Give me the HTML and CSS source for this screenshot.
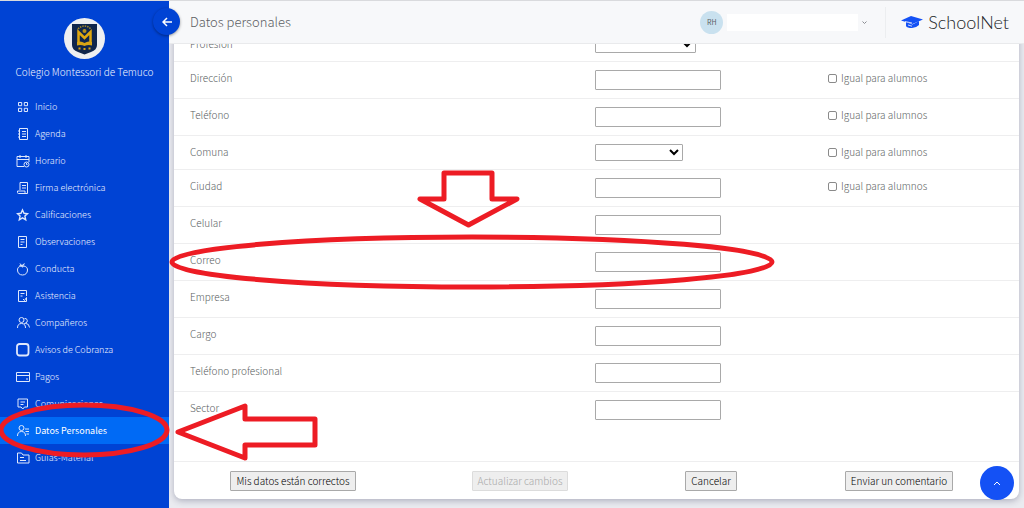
FILE: index.html
```
<!DOCTYPE html>
<html lang="es">

<head>
    <meta charset="UTF-8" />
    <meta name="viewport" content="width=device-width, initial-scale=1.0" />
    <title>SchoolNet - Datos personales</title>
    <link rel="stylesheet" href="styles.css">
</head>

<body>
    <div class="layout">
        <aside class="sidebar">
            <div class="school">
                <svg class="crest" viewBox="0 0 41 41">
                    <circle cx="20.5" cy="20.5" r="20.5" fill="#eeeff1" />
                    <path d="M8 6h25v21q0 5-6 7l-6.500 2.500L14 34q-6-2-6-7z" fill="#10264c" />
                    <path d="M14 11q6.500-6 13 0" fill="none" stroke="#a58a2c" stroke-width="1.500" stroke-dasharray="1.500 1" />
                    <circle cx="20.500" cy="13" r="2" fill="#b5901c" />
                    <path d="M14.500 24V14l6 6 6-6v10" fill="none" stroke="#e0a80e" stroke-width="2.500" />
                    <path d="M13 24q4-1.500 7.500 1 3.500-2.500 7.500-1v3.500q-4-1-7.500.5-3.500-1.500-7.500-.5z" fill="#d9a514" />
                    <path d="M14.500 30.500h2M19.500 31h2M24.500 30.500h2" stroke="#d9a514" stroke-width="2" />
                </svg>
                <span class="school-name">Colegio Montessori de Temuco</span>
            </div>

            <nav class="menu">
                <a href="#"><svg viewBox="0 0 14 14"><path d="M2.500 2.500h3.200v3.200H2.500zM8.300 2.500h3.200v3.200H8.300zM2.500 8.300h3.200v3.200H2.500zM8.300 8.300h3.200v3.200H8.300z" /></svg>Inicio</a>
                <a href="#"><svg viewBox="0 0 14 14"><path d="M3.500 1.500h8v11h-8zM2 4h2M2 7h2M2 10h2M6 4.500h4M6 7h4M6 9.500h4" /></svg>Agenda</a>
                <a href="#"><svg viewBox="0 0 14 14"><path d="M8 12.500H1v-10h12V8M1 5.500h12M4 1v3M10 1v3" /><circle cx="10.500" cy="10.500" r="2.500" /><path d="M10.500 9v1.500h1" /></svg>Horario</a>
                <a href="#"><svg viewBox="0 0 14 14"><path d="M4 9V1.500h7.500v11H2.500q-1 0-1-1V10H9v1.500q0 1 1 1M6 4.500h4M6 7h4" /></svg>Firma electrónica</a>
                <a href="#"><svg class="bold" viewBox="0 0 14 14"><path d="M6.500 2l1.500 3.300 3.500.4-2.600 2.400.8 3.700-3.200-1.900-3.200 1.900.8-3.700L1.500 5.700 5 5.300z" /></svg>Calificaciones</a>
                <a href="#"><svg viewBox="0 0 14 14"><path d="M2.500 1.500h8v11h-8zM4.500 4.500h4M4.500 7h4M4.500 9.500h2" /></svg>Observaciones</a>
                <a href="#"><svg viewBox="0 0 14 14"><path d="M6.500 5C4 3.500 1.500 5 1.500 8s2 5 5 5 5-2 5-5-2.500-4.500-5-3zM6.500 5L4 1.500M6.500 4.500q0-2 2-3M3.500 3.500l5-.5" /></svg>Conducta</a>
                <a href="#"><svg viewBox="0 0 14 14"><path d="M10.500 7V1.500h-8v11h4.500M4.500 4.500h4M4.500 7h2M7 10l1.500 1.500 2-3v4H7" /></svg>Asistencia</a>
                <a href="#"><svg viewBox="0 0 14 14"><circle cx="5.500" cy="4" r="2.500" /><path d="M1.500 12q0-4.500 4-4.500t4 4.500M8.500 2.500a2 2 0 1 1 1 4.500M10 7.500q3 0 3.500 4M8 8l2-1" /></svg>Compañeros</a>
                <a href="#"><svg class="thick" viewBox="0 0 14 14"><rect x="1" y="1" width="11.500" height="11.500" rx="2.500" /></svg>Avisos de Cobranza</a>
                <a href="#"><svg viewBox="0 0 14 14"><path d="M.500 2.500h13v9H.500zM.500 5.500h13M10 9h2" /></svg>Pagos</a>
                <a href="#"><svg viewBox="0 0 14 14"><path d="M2 2h9.500v8H8.500l-1.700 2L5 10H2zM4.500 5h4.500M4.500 7.500h3" /></svg>Comunicaciones</a>
                <a href="#" class="active"><svg viewBox="0 0 14 14"><circle cx="5.500" cy="4" r="2.500" /><path d="M1.500 12q0-4.500 4-4.500t4 4.500M9 5h4M9.500 7.500H13M10.500 10H13" /></svg>Datos Personales</a>
                <a href="#"><svg viewBox="0 0 14 14"><path d="M1.500 12V2h4l1.500 2h6v8zM4 6.500h4M4 9.500h6" /></svg>Guías-Material</a>
            </nav>

            <button class="collapse" aria-label="Ocultar menú">
                <svg viewBox="0 0 10 10"><path d="M5 1L1 5l4 4M1 5h9" /></svg>
            </button>
        </aside>

        <main class="main">
            <header class="topbar">
                <h1>Datos personales</h1>
                <div class="user">
                    <span class="avatar">RH</span>
                    <span class="user-name"></span>
                    <svg class="chevron" viewBox="0 0 5 3"><path d="M.500.500l2 2 2-2" /></svg>
                </div>
                <a href="#" class="brand">
                    <svg viewBox="0 0 22 12">
                        <path d="M0 4.500L10 0l12 3.500L11.500 8z" fill="#1451f5" />
                        <path d="M5 6l6.500 2.500L18 5v4q-3 3-7 3-5 0-6-2z" fill="#1451f5" />
                        <path d="M4 5.500l7 1.500M7 9l4 1.200" stroke="#f7f8fa" stroke-width="0.800" fill="none" />
                    </svg>
                    SchoolNet
                </a>
            </header>

            <form class="card">
                <div class="row short">
                    <label for="profesion">Profesión</label>
                    <div><select id="profesion" class="wide"><option></option></select></div>
                </div>
                <div class="row">
                    <label for="direccion">Dirección</label>
                    <div><input type="text" id="direccion"></div>
                    <label class="same"><input type="checkbox">Igual para alumnos</label>
                </div>
                <div class="row">
                    <label for="telefono">Teléfono</label>
                    <div><input type="text" id="telefono"></div>
                    <label class="same"><input type="checkbox">Igual para alumnos</label>
                </div>
                <div class="row short">
                    <label for="comuna">Comuna</label>
                    <div><select id="comuna"><option></option></select></div>
                    <label class="same"><input type="checkbox">Igual para alumnos</label>
                </div>
                <div class="row">
                    <label for="ciudad">Ciudad</label>
                    <div><input type="text" id="ciudad"></div>
                    <label class="same"><input type="checkbox">Igual para alumnos</label>
                </div>
                <div class="row">
                    <label for="celular">Celular</label>
                    <div><input type="text" id="celular"></div>
                </div>
                <div class="row">
                    <label for="correo">Correo</label>
                    <div><input type="text" id="correo"></div>
                </div>
                <div class="row">
                    <label for="empresa">Empresa</label>
                    <div><input type="text" id="empresa"></div>
                </div>
                <div class="row">
                    <label for="cargo">Cargo</label>
                    <div><input type="text" id="cargo"></div>
                </div>
                <div class="row">
                    <label for="telprof">Teléfono profesional</label>
                    <div><input type="text" id="telprof"></div>
                </div>
                <div class="row last">
                    <label for="sector">Sector</label>
                    <div><input type="text" id="sector"></div>
                </div>
                <div class="actions">
                    <button type="button">Mis datos están correctos</button>
                    <button type="button" disabled>Actualizar cambios</button>
                    <button type="button">Cancelar</button>
                    <button type="button">Enviar un comentario</button>
                </div>
            </form>
        </main>
    </div>

    <button class="to-top" aria-label="Subir">
        <svg viewBox="0 0 8 5"><path d="M1 4l3-3 3 3" /></svg>
    </button>

    <!-- red marks over the page -->
    <svg class="marks" viewBox="0 0 1024 508">
        <ellipse cx="472" cy="262" rx="300" ry="25" />
        <ellipse cx="84" cy="430" rx="83" ry="25" />
        <path d="M444 173h48v26h25l-48.500 26L420 199h24z" />
        <path d="M178 432l67-26v13h70v26h-70v13z" />
    </svg>
</body>

</html>
```
FILE: styles.css
```
* {
    box-sizing: border-box;
}

body {
    margin: 0;
    font-family: "Noto Sans CJK SC", "Open Sans", sans-serif;
    font-weight: 300;
    font-size: 10px;
    line-height: 16px;
    color: #5c5f64;
    background: #eaebf0;
}

button,
input,
select {
    font-family: inherit;
    font-size: 10px;
}

.layout {
    display: flex;
    min-height: 100vh;
    border-top: 1px solid #d9dadd;
}

/* sidebar */
.sidebar {
    position: relative;
    z-index: 3;
    width: 169px;
    flex-shrink: 0;
    background: #0043d4;
    color: #f0f4fe;
}

.school {
    display: flex;
    flex-direction: column;
    align-items: center;
    gap: 5px;
    height: 92px;
    padding-top: 17px;
}

.crest {
    width: 41px;
    height: 41px;
}

.menu a {
    display: flex;
    align-items: center;
    gap: 5px;
    height: 27px;
    padding-left: 16px;
    font-size: 9px;
    color: #f0f4fe;
    text-decoration: none;
}

.menu svg {
    width: 14px;
    height: 14px;
    fill: none;
    stroke: #dfe8fc;
    stroke-width: 1;
}

.menu .bold {
    stroke-width: 1.4;
}

.menu .thick {
    stroke-width: 1.8;
}

.menu .active {
    background: #006af5;
    color: white;
    font-weight: 400;
}

.collapse {
    position: absolute;
    top: 7px;
    right: -11px;
    width: 27px;
    height: 27px;
    padding: 0;
    border: none;
    border-radius: 50%;
    background: #0043d4;
    box-shadow: 0 1px 3px rgba(0, 0, 0, 0.4);
}

.collapse svg {
    display: block;
    width: 10px;
    height: 10px;
    margin: 0 auto;
    fill: none;
    stroke: white;
    stroke-width: 1.5;
}

/* top bar */
.main {
    flex: 1;
    min-width: 0;
}

.topbar {
    position: relative;
    z-index: 2;
    display: flex;
    align-items: center;
    height: 43px;
    padding: 0 15px 0 21px;
    background: #f7f8fa;
    border-bottom: 1px solid #e9eaec;
}

.topbar h1 {
    flex: 1;
    margin: 0;
    font-size: 13px;
    font-weight: 300;
}

.user {
    display: flex;
    align-items: center;
    gap: 4px;
}

.avatar {
    width: 23px;
    height: 23px;
    border-radius: 50%;
    background: #c9e1ef;
    font-size: 7px;
    font-weight: 400;
    line-height: 23px;
    text-align: center;
}

.user-name {
    width: 131px;
    height: 17px;
    background: white;
}

.chevron {
    width: 5px;
    height: 3px;
    fill: none;
    stroke: #8a8d92;
}

.brand {
    display: flex;
    align-items: center;
    gap: 5px;
    height: 31px;
    margin-left: 18px;
    padding-left: 15px;
    border-left: 1px solid #eceef0;
    font-family: Lato, sans-serif;
    font-size: 18px;
    font-weight: 300;
    color: #222428;
    text-decoration: none;
}

.brand svg {
    width: 22px;
    height: 12px;
}

/* form, scrolled a little under the top bar */
.card {
    margin: -16px 5px 9px;
    background: white;
    border-radius: 8px;
    box-shadow: 0 2px 6px rgba(40, 44, 80, 0.3);
}

.row {
    display: grid;
    grid-template-columns: 405fr 233fr 191fr;
    align-items: start;
    height: 37px;
    padding: 8px 0 0 16px;
    border-bottom: 1px solid #eeeeef;
}

.row.short {
    height: 34px;
}

.row.last {
    height: 70px;
}

.row > div {
    display: flex;
}

.row input[type="text"] {
    width: 126px;
    height: 20px;
    border: 1px solid #a9a9a9;
    border-radius: 1px;
}

.row select {
    width: 88px;
    height: 17px;
    padding: 0;
    border: 1px solid #a9a9a9;
    border-radius: 1px;
    background: white;
    color: black;
    font-size: 8px;
}

.row select.wide {
    width: 101px;
}

.same {
    display: flex;
    align-items: center;
    gap: 4px;
}

.same input {
    appearance: none;
    width: 9px;
    height: 9px;
    margin: 0;
    border: 1px solid #8a8a8a;
    border-radius: 2px;
}

.actions {
    display: grid;
    grid-template-columns: 238fr 216fr 166fr 210fr;
    justify-items: center;
    align-items: center;
    height: 37px;
    padding-right: 15px;
}

.actions button {
    height: 20px;
    padding: 0 5px;
    border: 1px solid #a9a9a9;
    border-radius: 1px;
    background: #eeeeee;
    color: #000000;
    font-weight: 300;
    line-height: 16px;
}

.actions button:disabled {
    border-color: #dcdcdc;
    color: #a8a8a8;
}

.to-top {
    position: fixed;
    right: 10px;
    bottom: 8px;
    z-index: 4;
    width: 34px;
    height: 34px;
    padding: 0;
    border: none;
    border-radius: 50%;
    background: #1451f5;
}

.to-top svg {
    display: block;
    width: 8px;
    height: 5px;
    margin: 0 auto;
    fill: none;
    stroke: white;
}

.marks {
    position: absolute;
    top: 0;
    left: 0;
    z-index: 5;
    width: 100%;
    pointer-events: none;
    fill: none;
    stroke: #ed1c24;
    stroke-width: 5;
    stroke-linejoin: round;
}
```
